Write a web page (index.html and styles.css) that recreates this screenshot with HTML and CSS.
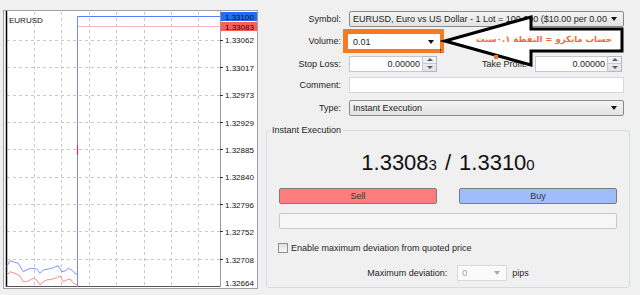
FILE: index.html
```html
<!DOCTYPE html>
<html lang="en">
<head>
  <meta charset="UTF-8" />
  <title>Order</title>
  <link rel="stylesheet" href="styles.css">
</head>
<body>
<div class="window">

  <div class="chart">
    <svg width="256" height="280" viewBox="3 10 256 280">
      <rect x="3.5" y="10.5" width="254" height="278" fill="#fff" stroke="#a0a0a0" />
      <g stroke="#c8c8c8" stroke-dasharray="3 3">
        <line x1="7" y1="40.5" x2="220" y2="40.5" />
        <line x1="7" y1="67.5" x2="220" y2="67.5" />
        <line x1="7" y1="95.5" x2="220" y2="95.5" />
        <line x1="7" y1="122.5" x2="220" y2="122.5" />
        <line x1="7" y1="149.5" x2="220" y2="149.5" />
        <line x1="7" y1="177.5" x2="220" y2="177.5" />
        <line x1="7" y1="204.5" x2="220" y2="204.5" />
        <line x1="7" y1="231.5" x2="220" y2="231.5" />
        <line x1="7" y1="259.5" x2="220" y2="259.5" />
        <line x1="34.5" y1="12" x2="34.5" y2="286" />
        <line x1="61.5" y1="12" x2="61.5" y2="286" />
        <line x1="89.5" y1="12" x2="89.5" y2="286" />
        <line x1="116.5" y1="12" x2="116.5" y2="286" />
        <line x1="144.5" y1="12" x2="144.5" y2="286" />
        <line x1="171.5" y1="12" x2="171.5" y2="286" />
        <line x1="198.5" y1="12" x2="198.5" y2="286" />
      </g>
      <line x1="6.5" y1="11" x2="6.5" y2="287" stroke="#000" stroke-width="1.5" />
      <line x1="6" y1="286.5" x2="221" y2="286.5" stroke="#555" />
      <line x1="220.5" y1="11" x2="220.5" y2="287" stroke="#999" />
      <g stroke="#333">
        <line x1="220" y1="40.5" x2="223" y2="40.5" />
        <line x1="220" y1="67.5" x2="223" y2="67.5" />
        <line x1="220" y1="95.5" x2="223" y2="95.5" />
        <line x1="220" y1="122.5" x2="223" y2="122.5" />
        <line x1="220" y1="149.5" x2="223" y2="149.5" />
        <line x1="220" y1="177.5" x2="223" y2="177.5" />
        <line x1="220" y1="204.5" x2="223" y2="204.5" />
        <line x1="220" y1="231.5" x2="223" y2="231.5" />
        <line x1="220" y1="259.5" x2="223" y2="259.5" />
      </g>

      <line x1="78" y1="16.5" x2="220" y2="16.5" stroke="#5d7dff" />
      <line x1="78" y1="26.5" x2="220" y2="26.5" stroke="#ffb3b3" />
      <line x1="77.5" y1="16" x2="77.5" y2="287" stroke="#6f8cff" />
      <line x1="77.5" y1="145" x2="77.5" y2="155" stroke="#c0306a" stroke-width="1.2" />
      <polyline fill="none" stroke="#7d93ff" points="6.7,266.7 10,260.7 15,262.3 18.3,263.3 23.3,271.7 28.3,269 31.7,268.3 36.7,269 40,273.3 43.3,270 48.3,269 53.3,267.7 58.3,265.7 61.7,271.7 65,271 68.3,268.3 71.7,270 75,273.3 77.3,274.3" />
      <polyline fill="none" stroke="#ff8c8c" points="6.7,275.7 10,271.7 15,273.3 20,276 23.3,281.7 26.7,281.7 30,280 33.3,278.3 36.7,280 40,285 43.3,281.7 46.7,280 51.7,279.3 56.7,277.7 60,275.7 63.3,281.7 66.7,280 70,279 73.3,283.3 77.3,285" />

      <text x="9" y="23" class="axis">EURUSD</text>

      <rect x="221" y="12" width="36" height="9" fill="#1f6ef2" />
      <text x="225" y="19.8" class="axis" fill="#fff">1.33100</text>
      <rect x="221" y="22" width="36" height="9" fill="#ff5c5c" />
      <text x="225" y="29.8" class="axis" fill="#fff">1.33083</text>
      <g class="axis">
        <text x="225" y="43">1.33062</text>
        <text x="225" y="70.5">1.33017</text>
        <text x="225" y="98">1.32973</text>
        <text x="225" y="125.5">1.32929</text>
        <text x="225" y="152.5">1.32885</text>
        <text x="225" y="180">1.32840</text>
        <text x="225" y="207.5">1.32796</text>
        <text x="225" y="235">1.32752</text>
        <text x="225" y="262.5">1.32708</text>
        <text x="225" y="286">1.32664</text>
      </g>
    </svg>
  </div>

  <div class="order">
    <div class="row row-symbol">
      <span class="lbl">Symbol:</span>
      <div class="combo"><span class="combo-text">EURUSD, Euro vs US Dollar - 1 Lot = 100,000 ($10.00 per 0.00001)</span><i class="caret"></i></div>
    </div>
    <div class="row row-volume">
      <span class="lbl">Volume:</span>
      <div class="volume"><span class="combo-text">0.01</span><i class="caret"></i></div>
      <i class="grip"></i>
    </div>
    <div class="row row-stops">
      <span class="lbl">Stop Loss:</span>
      <div class="spin">
        <span class="spin-val">0.00000</span>
        <span class="spin-btns"><b class="up"></b><b class="down"></b></span>
      </div>
      <span class="lbl lbl-tp">Take Profit:</span>
      <div class="spin spin-tp">
        <span class="spin-val">0.00000</span>
        <span class="spin-btns"><b class="up"></b><b class="down"></b></span>
      </div>
    </div>
    <div class="row row-comment">
      <span class="lbl">Comment:</span>
      <div class="text-input"></div>
    </div>
    <div class="row row-type">
      <span class="lbl">Type:</span>
      <div class="combo"><span class="combo-text">Instant Execution</span><i class="caret"></i></div>
    </div>

    <fieldset class="group">
      <legend>Instant Execution</legend>
      <div class="quote">
        <span>1.3308</span><small>3</small><span class="slash">/</span><span>1.3310</span><small>0</small>
      </div>
      <div class="trade">
        <div class="btn sell">Sell</div>
        <div class="btn buy">Buy</div>
      </div>
      <div class="status"></div>
      <div class="check-row">
        <span class="box"></span>
        <span>Enable maximum deviation from quoted price</span>
      </div>
      <div class="dev-row">
        <span>Maximum deviation:</span>
        <div class="dev-select"><span class="combo-text">0</span><i class="caret caret-off"></i></div>
        <span>pips</span>
      </div>
    </fieldset>
  </div>

  <div class="callout">
    <svg width="190" height="60" viewBox="440 12 190 60">
      <polygon points="445,41 531,17 531,29 622,29 622,51 531,51 531,65" fill="#fff" stroke="#000" stroke-width="3" />
      <rect x="494" y="55" width="4" height="4" fill="#f47b20" />
      <text x="544" y="42" class="note" direction="rtl" text-anchor="middle">حساب مايكرو = النقطة ٠.١سنت</text>
    </svg>
  </div>

</div>
</body>
</html>
```

FILE: styles.css
```css
* {
  box-sizing: border-box;
}
body {
  margin: 0;
  background: #f0f0f0;
  font-family: 'Liberation Sans', Arial, sans-serif;
  font-size: 9px;
  color: #1e1e1e;
}
.window {
  position: relative;
  display: flex;
  width: 640px;
  height: 295px;
}
.chart {
  margin: 10px 0 0 3px;
  width: 256px;
  height: 280px;
}
.chart svg {
  display: block;
}
.axis {
  font-family: 'Liberation Sans', Arial, sans-serif;
  font-size: 8px;
  fill: #111;
}
.order {
  width: 370px;
  margin-left: 1px;
}
.row {
  display: flex;
  align-items: center;
}
.row-symbol {
  margin-top: 8px;
  height: 22px;
}
.row-volume {
  height: 22px;
}
.row-stops {
  height: 23px;
}
.row-comment {
  height: 20px;
}
.row-type {
  height: 26px;
}
.lbl {
  flex: none;
  width: 81px;
  margin-right: 8px;
  text-align: right;
}
.lbl-tp {
  width: 90px;
}
.combo {
  display: flex;
  align-items: center;
  width: 275px;
  height: 16px;
  padding-left: 3px;
  border: 1px solid #8a8a8a;
  border-radius: 2px;
  background: linear-gradient(#f4f4f4, #e3e3e3);
  white-space: nowrap;
  overflow: hidden;
}
.combo-text {
  flex: 1;
  overflow: hidden;
}
.caret {
  flex: none;
  width: 0;
  height: 0;
  margin: 0 6px 0 4px;
  border-left: 3.5px solid transparent;
  border-right: 3.5px solid transparent;
  border-top: 4px solid #111;
}
.caret-off {
  border-top-color: #a8a8a8;
}
.volume {
  display: flex;
  align-items: center;
  width: 101px;
  height: 24px;
  margin-left: -6px;
  padding-left: 5px;
  border: 5px solid #f47b20;
  border-right-width: 4px;
  border-bottom-width: 4px;
  background: #fff;
}
.grip {
  align-self: flex-end;
  width: 2px;
  height: 4px;
  margin: 0 0 -1px -4px;
  border-left: 1px dotted #333;
}
.spin {
  display: flex;
  width: 88px;
  height: 16px;
}
.spin-tp {
  width: 87px;
}
.spin-val {
  flex: 1;
  padding-right: 2px;
  border: 1px solid #c5c8cf;
  background: #fff;
  text-align: right;
  line-height: 14px;
}
.spin-btns {
  display: flex;
  flex-direction: column;
  width: 14px;
  border: 1px solid #b5b8bf;
  border-left: none;
  background: linear-gradient(#f7f7f7, #e2e2e2);
}
.spin-btns b {
  flex: 1;
  display: flex;
  align-items: center;
  justify-content: center;
}
.spin-btns b + b {
  border-top: 1px solid #c8cbd1;
}
.up::before,
.down::before {
  content: "";
  border-left: 3px solid transparent;
  border-right: 3px solid transparent;
}
.up::before {
  border-bottom: 3px solid #4d5c7a;
}
.down::before {
  border-top: 3px solid #4d5c7a;
}
.text-input {
  width: 275px;
  height: 16px;
  border: 1px solid #d4d7dc;
  background: #fff;
}
.group {
  width: 364px;
  height: 163px;
  margin: 4px 0 0 6px;
  padding: 0 12px;
  border: 1px solid #d3dce3;
  border-radius: 3px;
}
.group legend {
  margin-left: -9px;
  padding: 0 2px;
  line-height: 11px;
}
.quote {
  height: 26px;
  margin-top: 14px;
  line-height: 26px;
  text-align: center;
  font-size: 22px;
  color: #111;
}
.quote small {
  font-size: 15px;
}
.quote .slash {
  margin: 0 8px;
}
.trade {
  display: flex;
  gap: 22px;
  margin-top: 12px;
}
.btn {
  flex: 1;
  height: 16px;
  border: 1px solid #7c7c7c;
  border-radius: 2px;
  text-align: center;
  line-height: 14px;
  color: #333;
}
.sell {
  background: #ff7d7d;
}
.buy {
  background: #9ebdfa;
}
.status {
  height: 16px;
  margin-top: 9px;
  border: 1px solid #c9c9c9;
  border-radius: 2px;
  background: #f6f6f6;
}
.check-row {
  display: flex;
  align-items: center;
  height: 14px;
  margin: 12px 0 0 -1px;
}
.box {
  width: 10px;
  height: 10px;
  margin-right: 3px;
  border: 1px solid #8e8f8f;
  background: linear-gradient(#dedede, #f8f8f8);
}
.dev-row {
  display: flex;
  align-items: center;
  justify-content: center;
  height: 16px;
  margin-top: 10px;
}
.dev-select {
  display: flex;
  align-items: center;
  width: 50px;
  height: 16px;
  margin: 0 5px 0 10px;
  padding-left: 4px;
  border: 1px solid #d9d9d9;
  background: #fafafa;
  color: #a0a0a0;
}
.callout {
  position: absolute;
  left: 440px;
  top: 12px;
}
.callout svg {
  display: block;
}
.note {
  font-family: 'DejaVu Sans', sans-serif;
  font-size: 8.5px;
  font-weight: bold;
  fill: #f26b3a;
}
```
